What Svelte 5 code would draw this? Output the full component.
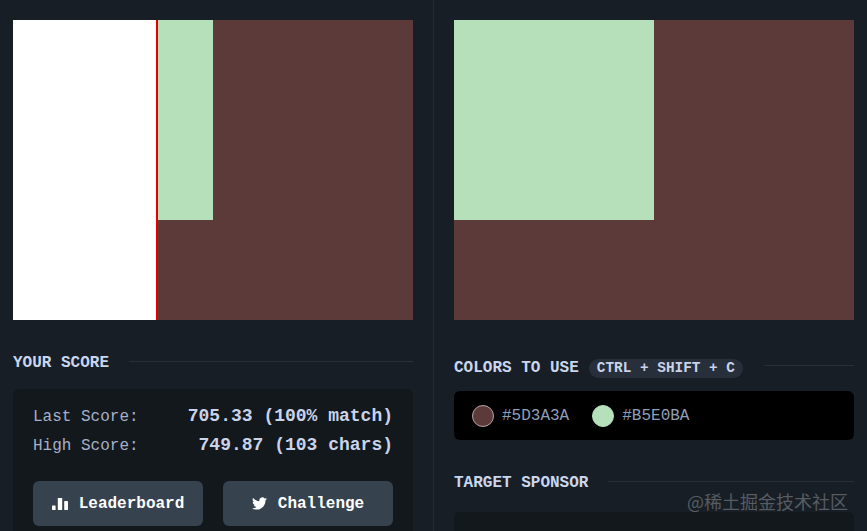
<script lang="ts">
  const colors = ["#5D3A3A", "#B5E0BA"];
  const stats = [
    { label: "Last Score:", value: "705.33 (100% match)" },
    { label: "High Score:", value: "749.87 (103 chars)" },
  ];
</script>

<div class="page">
  <section class="col left">
    <div class="canvas">
      <div class="square"></div>
      <div class="reveal"></div>
    </div>

    <div class="heading score-heading">
      <h2>YOUR SCORE</h2>
      <span class="rule"></span>
    </div>

    <div class="score-card">
      {#each stats as s}
        <div class="stat">
          <span class="label">{s.label}</span>
          <span class="value">{s.value}</span>
        </div>
      {/each}
      <div class="actions">
        <button>
          <svg width="16" height="12" viewBox="0 0 16 12" fill="currentColor">
            <rect x="0" y="7.5" width="3.6" height="4.5" rx="0.4" />
            <rect x="5.8" y="0" width="4.4" height="12" rx="0.4" />
            <rect x="12.2" y="3" width="3.8" height="9" rx="0.4" />
          </svg>
          Leaderboard
        </button>
        <button>
          <svg width="15" height="15" viewBox="0 0 24 24" fill="currentColor">
            <path d="M23.95 4.57a10 10 0 0 1-2.82.77 4.96 4.96 0 0 0 2.16-2.72c-.95.56-2 .96-3.12 1.19a4.92 4.92 0 0 0-8.38 4.48C7.69 8.1 4.07 6.13 1.64 3.16a4.82 4.82 0 0 0-.67 2.48c0 1.71.87 3.21 2.19 4.1a4.9 4.9 0 0 1-2.23-.62v.06a4.92 4.92 0 0 0 3.95 4.83 5 5 0 0 1-2.21.08 4.94 4.94 0 0 0 4.6 3.42A9.87 9.87 0 0 1 0 19.54a14 14 0 0 0 7.56 2.21c9.05 0 14-7.5 14-13.98 0-.21 0-.42-.02-.63A9.94 9.94 0 0 0 24 4.59z" />
          </svg>
          Challenge
        </button>
      </div>
    </div>
  </section>

  <section class="col right">
    <div class="canvas">
      <div class="square"></div>
    </div>

    <div class="heading colors-heading">
      <h2>COLORS TO USE</h2>
      <span class="kbd">CTRL + SHIFT + C</span>
      <span class="rule"></span>
    </div>

    <div class="palette">
      {#each colors as c}
        <div class="swatch">
          <span class="dot" style="background: {c}"></span>
          <span class="hex">{c}</span>
        </div>
      {/each}
    </div>

    <div class="heading sponsor-heading">
      <h2>TARGET SPONSOR</h2>
      <span class="rule"></span>
    </div>

    <div class="sponsor"></div>
  </section>

  <div class="watermark">@稀土掘金技术社区</div>
</div>

<style>
  :global(body) {
    margin: 0;
    background: #181e25;
  }
  .page {
    position: relative;
    display: grid;
    grid-template-columns: 434px 433px;
    width: 867px;
    height: 531px;
    overflow: hidden;
    background: #181e25;
    font-family: "Liberation Mono", "DejaVu Sans Mono", monospace;
    color: #c9d3ea;
  }
  .col {
    padding: 20px 13px 0 13px;
    min-width: 0;
  }
  .left {
    padding-right: 20px;
    border-right: 1px solid #252b33;
  }
  .right {
    padding-left: 20px;
  }
  .canvas {
    position: relative;
    width: 400px;
    height: 300px;
    background: #5d3a3a;
  }
  .square {
    width: 200px;
    height: 200px;
    background: #b5e0ba;
  }
  .reveal {
    position: absolute;
    left: 0;
    top: 0;
    width: 143px;
    height: 300px;
    background: #fff;
    border-right: 2px solid #e00000;
  }
  .heading {
    display: flex;
    align-items: center;
    gap: 20px;
    height: 20px;
  }
  .score-heading {
    margin-top: 33px;
  }
  .colors-heading {
    margin-top: 38px;
    gap: 10px;
  }
  .sponsor-heading {
    margin-top: 33px;
  }
  h2 {
    margin: 0;
    font-size: 16px;
    font-weight: 700;
    color: #c9d6ee;
    white-space: nowrap;
  }
  .rule {
    flex: 1;
    height: 1px;
    margin-bottom: 4px;
    background: #292f37;
  }
  .colors-heading .rule {
    margin-bottom: 6px;
  }
  .kbd {
    padding: 2px 8px;
    border-radius: 10px;
    background: #272f3a;
    font-size: 14.4px;
    font-weight: 700;
    line-height: 15px;
    color: #c9d3ea;
    white-space: nowrap;
    margin-right: 11px;
  }
  .score-card {
    margin-top: 16px;
    padding: 13px 20px 0;
    height: 143px;
    box-sizing: border-box;
    background: #13181d;
    border-radius: 6px 6px 0 0;
  }
  .stat {
    display: flex;
    justify-content: space-between;
    align-items: baseline;
    height: 29px;
    line-height: 29px;
  }
  .label {
    font-size: 16px;
    color: #a6b0c8;
  }
  .value {
    font-size: 18px;
    font-weight: 700;
    color: #c9d3ea;
  }
  .actions {
    display: grid;
    grid-template-columns: 170px 170px;
    gap: 20px;
    margin-top: 21px;
  }
  button {
    display: flex;
    align-items: center;
    justify-content: center;
    gap: 11px;
    height: 45px;
    padding: 0;
    border: none;
    border-radius: 6px;
    background: #36424e;
    color: #fff;
    font-family: inherit;
    font-size: 16px;
    font-weight: 700;
  }
  .palette {
    display: flex;
    align-items: center;
    gap: 23px;
    margin-top: 13px;
    height: 49px;
    padding: 0 18px;
    background: #000;
    border-radius: 6px;
  }
  .swatch {
    display: flex;
    align-items: center;
    gap: 8px;
  }
  .dot {
    box-sizing: border-box;
    width: 22px;
    height: 22px;
    border-radius: 50%;
    border: 1px solid #b9a6a6;
  }
  .swatch:last-child .dot {
    border-color: #b5e0ba;
  }
  .hex {
    font-size: 16px;
    color: #8f9fb8;
  }
  .sponsor {
    margin-top: 19px;
    height: 60px;
    background: #13181d;
    border-radius: 6px;
  }
  .watermark {
    position: absolute;
    right: 19px;
    top: 489px;
    font-family: "Noto Sans CJK SC", sans-serif;
    font-size: 18px;
    line-height: 24px;
    color: rgba(255, 255, 255, 0.28);
  }
</style>
